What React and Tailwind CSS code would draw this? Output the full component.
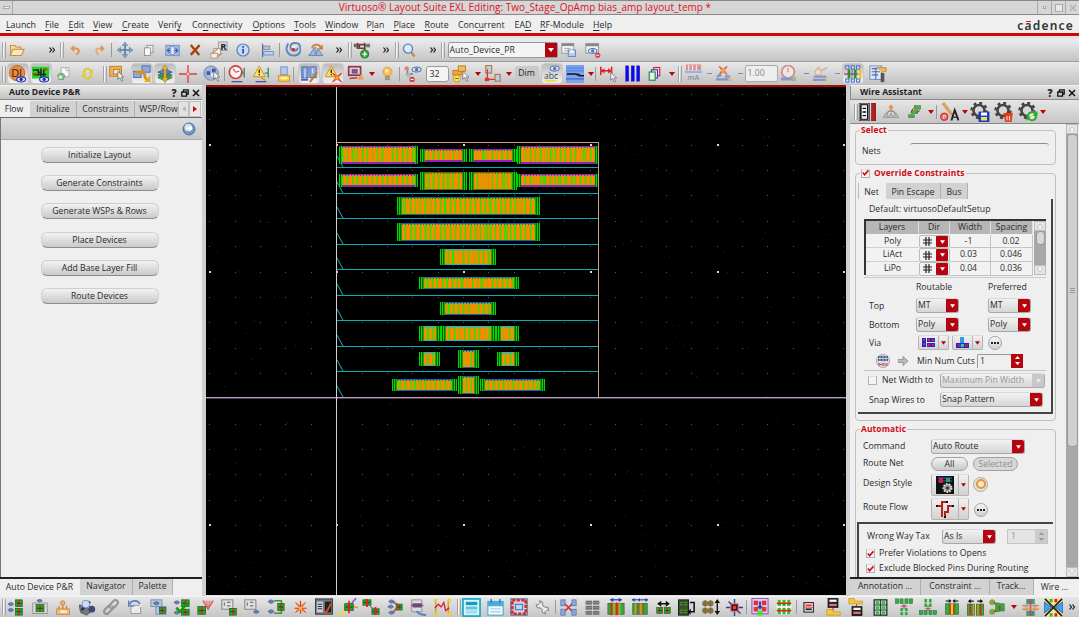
import React from "react";

/* ---------- tiny drawing helpers ---------- */
const R = (x, y, w, h, f, s, sw = 1) => (
  <rect x={x} y={y} width={w} height={h} fill={f || "none"} stroke={s || "none"} strokeWidth={s ? sw : 0} />
);
const C = (x, y, r, f, s, sw = 1) => <circle cx={x} cy={y} r={r} fill={f || "none"} stroke={s || "none"} strokeWidth={s ? sw : 0} />;
const P = (d, s, sw = 1, f = "none") => <path d={d} stroke={s || "none"} strokeWidth={sw} fill={f} />;

const chip = (x, y, w = 7, h = 7) => (
  <g>
    {R(x, y, w, h, "#2f9e2f", "#176017", 0.8)}
    {R(x + w / 2 - 0.8, y, 1.6, h, "#e02020")}
    {R(x + 1, y + h / 2 - 0.5, w - 2, 1, "#0b4a0b")}
  </g>
);
const pin = (x, y) => (
  <g>
    {P(`M${x} ${y}h7`, "#d02020", 1)}
    <ellipse cx={x + 3.5} cy={y} rx="2.6" ry="2" fill="#5b83c4" stroke="#3a5a94" strokeWidth=".6" />
  </g>
);
const cursor = (x, y) => P(`M${x} ${y}l0 9 2-2 2 4 1.6-.8-2-3.8h3z`, "#555", 0.7, "#f4f4f4");
const eye = (x, y, f = "#2030b0") => (
  <g>
    <ellipse cx={x} cy={y} rx="5" ry="2.8" fill="#dfe6f5" stroke={f} strokeWidth="1.2" />
    {C(x, y, 1.9, f)}
  </g>
);
const minus = (x, y) => <g>{C(x, y, 3, "#d84040")}{R(x - 1.8, y - 0.5, 3.6, 1.1, "#fff")}</g>;
const warn = (x, y) => <g>{P(`M${x} ${y}l6.500 12h-13z`, "#c89010", 1, "#ffe27a")}{R(x - 0.7, y + 4, 1.5, 4, "#402000")}{R(x - 0.7, y + 9, 1.5, 1.4, "#402000")}</g>;
const gear = (x, y, r, f) => (
  <g>
    <circle cx={x} cy={y} r={r} fill="none" stroke={f} strokeWidth="2.4" strokeDasharray={`${(r * 6.283) / 16} ${(r * 6.283) / 16}`} />
    <circle cx={x} cy={y} r={r - 2} fill="none" stroke={f} strokeWidth="2.6" />
  </g>
);
const bars = (x, y, n, f, h = 10) => <g>{Array.from({ length: n }, (_, i) => <g key={i}>{R(x + i * 3, y, 1.8, h, f[i % f.length])}</g>)}</g>;
const burst = (x, y, r = 4) =>
  P(`M${x - r} ${y - r}L${x} ${y - 1.4}L${x + r} ${y - r}L${x + 1.4} ${y}L${x + r} ${y + r}L${x} ${y + 1.4}L${x - r} ${y + r}L${x - 1.4} ${y}Z`, "#e83010", 1, "#ffd020");

const ICONS = {
  folder: <g>{P("M3 15V4h5l1.5 2H15V9", "#c88a3c", 1.2, "#f7d9a4")}{P("M2.500 16L6 8.500h13L15.500 16z", "#c88a3c", 1.2, "#fbe6c2")}</g>,
  undo: <g>{P("M6 7h4.5c6 0 6 6 1 9.5", "#e0914a", 3)}{P("M8 1.500v11L2 7z", "", 0, "#e0914a")}</g>,
  redo: <g>{P("M14 7H9.500c-6 0-6 6-1 9.500", "#e8a96e", 3)}{P("M12 1.500v11L18 7z", "", 0, "#e0914a")}</g>,
  move: <g>{P("M10 3v14M3 10h14", "#5578a4", 2)}{P("M10 0l3.500 4.500h-7zM10 20l3.500-4.500h-7zM0 10l4.500-3.500v7zM20 10l-4.500-3.500v7z", "#54779f", 0.6, "#7fa2ca")}</g>,
  copy: <g>{R(8, 3, 8, 10, "#f0f0f0", "#808080")}{R(4.500, 6.500, 8, 10, "#f6f6f6", "#808080")}</g>,
  stretch: <g>{R(1, 3, 18, 14, "#9db8e4", "#6585c0")}{P("M6 7L3 10l3 3M14 7l3 3-3 3M3 10h4M17 10h-4", "#2d55a8", 1.4)}{R(8, 5, 4, 10, "#fff", "#6585c0")}</g>,
  del: P("M4 3l12 14M16.500 3L4 17", "#a8430f", 3.4),
  rot: <g>{R(9, 1, 9, 9, "#ddd", "#999")}<text x="14" y="9" fontSize="10" fontWeight="700" fontFamily="Open Sans, sans-serif" fill="#222" textAnchor="middle">R</text>{R(4, 8, 7, 6, "#f3f3f3", "#999")}{R(1, 13, 7, 5, "#f8efe0", "#a99")}{P("M2 13.500l6-5M7 17l6-4", "#e09040", 1.3)}</g>,
  info: <g>{C(10, 10, 7.500, "#c9daf4", "#5b83c4", 1.5)}{R(9, 8.500, 2.200, 6, "#2d55a8")}{R(9, 5, 2.200, 2.200, "#2d55a8")}</g>,
  align: <g>{P("M3.500 1v18", "#3b62aa", 1.4)}{R(5, 4, 8, 4.500, "#e9b3b3", "#5b83c4")}{R(5, 11.500, 13, 4.500, "#bcd0f0", "#5b83c4")}</g>,
  swirl: <g>{P("M4 2c-5 8 0 15 7 15 8 0 11-8 6-15-4-1-9-2-10 3-1 7 8 8 9 2", "#6285c0", 2.400)}{R(8.500, 5, 4, 6, "#f5f5f5")}{C(10.500, 9.500, 2.200, "#d83030")}</g>,
  flip: <g>{P("M1 17L9 6v11zM10 17h8.500L12 8z", "#54779f", 1, "#9dbae0")}{P("M5 8c1-6 9-6 11-1", "#d47a34", 2.200)}{P("M18.500 3v6.500h-6.500z", "", 0, "#d47a34")}</g>,
  schem: <g>{P("M1 5h4M5 2v7M7 3v5h5M7 4h6M13 2v8M13 5h5", "#6a3a3a", 1.800)}{R(1, 3, 3, 4, "#666")}{R(15, 3, 4, 4, "#777")}{C(13, 14.500, 4.500, "#2fa02f", "#177017", 0.800)}{P("M13 11.800v5.400M10.300 14.500h5.400", "#fff", 1.500)}</g>,
  mag: <g>{P("M11 11l6 7", "#c88a3c", 3)}{C(8, 7.500, 6, "#dfebfa", "#5b83c4", 1.900)}</g>,
  win: <g>{R(1, 2, 15, 12, "#f2f2f2", "#888")}{R(1, 2, 15, 3, "#888")}{P("M4 8h8M4 11h6", "#999")}{R(9, 10, 9, 8, "#b7cbea", "#5b7bb4")}{R(11, 10.500, 5, 3, "#fff")}</g>,
  wineye: <g>{R(1, 2, 15, 11, "#f2f2f2", "#888")}{R(1, 2, 15, 3, "#888")}{eye(9, 10.500, "#5574b4")}{minus(15, 15.500)}</g>,

  di: <g>{C(9, 9, 8.500, "#ee8a3c", "#c86020")}<text x="8.500" y="13" fontSize="12" fontFamily="Open Sans, sans-serif" fill="#222" textAnchor="middle">DI</text>{eye(13.500, 16)}</g>,
  lx: <g>{R(0, 2, 19, 13, "#20d820")}{P("M1 5.500h6v5h9M10 4v9M7 8h3M2 11h5M13 5v8", "#222", 1.600)}{R(1, 9, 4, 2, "#e02020")}{R(13, 4, 4, 2, "#e02020")}{eye(13.500, 16)}</g>,
  doc: <g>{P("M6 1h11v13H6z", "#999", 1, "#f8f8f8")}{P("M13 1v4h4", "#999")}{P("M1 12c3-5 10-3 10 1l-2 5H3z", "#4a9a5a", 1, "#7fc08a")}{C(5, 14.500, 2.200, "#eee")}</g>,
  refresh: <g>{P("M4 9c1-8 9-8 11-3M16 11c-1 8-9 8-11 3", "#dccb28", 2.800)}{P("M18.500 2.500v7h-7zM1.500 17.500v-7h7z", "", 0, "#dccb28")}</g>,
  sel: <g>{R(2, 1.500, 13, 11, "#f0b060", "#c07818")}{R(6, 5, 7, 5, "#e7e7e7", "#c07818")}{cursor(11, 7)}</g>,
  pull: <g>{R(0, 7, 9, 7, "#8da9dc", "#4a6ab0")}{R(10, 1, 9, 7, "#8da9dc", "#4a6ab0")}{P("M3 8h7c5 0 1 7 6 8", "#d8921c", 3.200)}{P("M12 19h7.500v-7.500z", "", 0, "#e8a628")}</g>,
  layers: <g>{P("M2 14l8-3.500 8 3.500-8 3.500z", "#2f7a3f", 1, "#4fb060")}{P("M2 11.500l8-3.500 8 3.500-8 3.500z", "#2f7a3f", 1, "#3c9c50")}{P("M2 8l8-3.500 8 3.500-8 3.500z", "#3a5a9c", 1, "#5e80c8")}{P("M10 0l3.500 4.500h-2.200v10h2.200L10 19.500l-3.500-5h2.200v-10H6.500z", "#a07010", 0.700, "#e8b838")}</g>,
  cross: <g>{P("M10 0v20M0 10h20", "#e04040", 1.500)}{C(10, 10, 2, "#f0d0d0", "#e04040", 0.700)}</g>,
  bluesel: <g>{C(9, 9, 8, "#a8b8d4", "#6a7fa8")}{R(4, 7, 4, 4, "#3a5ab0")}{R(10, 4, 4, 4, "#3a5ab0")}{R(9, 9, 3, 4, "#dfe8f8")}{cursor(12, 7)}</g>,
  gauge: <g>{C(8.500, 8, 7, "#fbf4f4", "#cc4444", 1.900)}{P("M8.500 8l-3-4M8.500 8l4-1", "#c84848", 1.2)}{P("M18 3v11M14 9h4", "#3a8a5a", 1.500)}{P("M4 18.500h12", "#3a5ab0", 1.500)}</g>,
  warn1: <g>{warn(8, 1)}{P("M18 3v11M14 9h4", "#3a8a5a", 1.500)}{P("M4 18.500h12", "#3a5ab0", 1.500)}{P("M10 14l5 3", "#e09020", 1.500)}</g>,
  brush: <g>{R(6, 1, 8, 10, "#b7caea", "#6a86bc")}{R(3, 12, 14, 7, "#f8d040", "#d08a18")}{R(6, 14, 8, 2.500, "#fff4b0")}</g>,
  dev: <g>{R(2, 2, 7, 12, "#7f9bd4", "#4a6ab0")}{R(11, 2, 7, 12, "#8fabe0", "#4a6ab0")}{P("M5.500 4v11M14 4v5", "#dfe8f8", 1.200)}{P("M19 8l-8 11", "#c07818", 2)}{R(1, 15, 8, 2.500, "#4a6ab0")}</g>,
  warnx: <g>{warn(8, 1)}{burst(14.500, 14, 5)}</g>,
  redbox: <g>{R(2, 2, 14, 10, "#cfdaf0", "#a03040", 2)}{R(6, 5.500, 6, 4, "#4a70c0", "#a03040")}{P("M3 16l9-1", "#b04030", 1.800)}{P("M16 11l4 6h-8z", "", 0, "#e8a050")}</g>,
  bulb: <g>{C(10, 7.500, 6, "#f7c050", "#d89030")}{C(9, 6.500, 2.500, "#ffe9a8")}{R(7.500, 13.500, 5, 5, "#a8a090", "#807868", 0.700)}</g>,
  neteye: <g>{eye(14, 5, "#5574b4")}{P("M4 4v6h6M2 10h3", "#777", 1.500)}{C(3, 4, 2.500, "#e08080")}{C(5, 11, 2.500, "#a8b8c8")}{minus(9, 16)}</g>,
  layersel: <g>{R(1, 6, 10, 5, "#f0a840", "#c07818")}{R(7, 1, 8, 6, "#f4bc60", "#c07818")}{C(5.500, 15, 4, "#fbe060", "#c89010")}{R(3.500, 14.500, 4, 1, "#806000")}{cursor(12, 7)}</g>,
  net: <g>{R(2, 0.500, 7, 9, "#b7cbea", "#b87838", 1.300)}{P("M4 5v12h9", "#d83030", 1.400)}{R(1, 15, 5, 4, "#e03030")}{R(13, 11, 6, 8, "#b7cbea", "#b87838", 1.300)}</g>,
  eyeabc: <g>{eye(13, 4, "#5574b4")}<text x="9" y="15.500" fontSize="9.500" fontFamily="Open Sans, sans-serif" fill="#444" textAnchor="middle">abc</text>{R(2, 17, 13, 1.600, "#e8d838")}</g>,
  lines: <g>{R(0, 0, 20, 20, "#7ba4f0")}{P("M0 3.500h20M0 6.500h20", "#4a78d8", 1)}{P("M1 10h10l5 2h4", "#111", 1.600)}{P("M0 15.500h20", "#2d55c0", 1)}{C(14, 11, 1.500, "#222")}</g>,
  ruler: <g>{P("M2 2v9M14 2v9M3 6.500h10", "#e02020", 1.700)}{P("M2 6.500l4-3v6zM14 6.500l-4-3v6z", "", 0, "#e02020")}{cursor(13, 8)}</g>,
  bluebars: <g>{R(2, 1, 3.500, 18, "#0808f8", "#1818a8", 0.500)}{R(8.500, 1, 3.500, 18, "#0808f8", "#1818a8", 0.500)}{R(15, 1, 3.500, 18, "#0808f8", "#1818a8", 0.500)}</g>,
  stack: <g>{R(9, 2, 8, 11, "#f6dcdc", "#d82020", 1.500)}{R(6, 5, 8, 11, "#e8e8f8", "#3838d0", 1.500)}{R(3, 8, 8, 11, "#ececec", "#1f9a3a", 1.600)}</g>,
  ma: <g opacity=".8">{R(2, 0.500, 16, 6, "#e08080")}{R(1, 7, 18, 2.500, "#8fa8dc")}{P("M5 1v6M9 1v6M13 1v6", "#fff", 1)}<text x="10" y="16.500" fontSize="7.500" fontFamily="Open Sans, sans-serif" fontWeight="700" fill="#8090a0" textAnchor="middle">mA</text></g>,
  dim1: <g opacity=".8">{burst(9, 6, 4.500)}{P("M1 16h17M2 13l5-2M11 13h6", "#6a88c8", 2.600)}{R(15, 14, 4, 3, "#e0c860")}</g>,
  dim2: <g opacity=".75">{C(9, 7.500, 7, "#f6eaea", "#d87070", 2)}{P("M9 8V3", "#d87070", 1.400)}{P("M1 15.500h15", "#6a88c8", 3.400)}{R(13, 13, 5, 5, "#8ab48a")}</g>,
  dim3: <g opacity=".75">{P("M4 8l4-6M8 7l9-4", "#d0b0a0", 2.400)}{C(7, 8, 3.500, "#f4dcc8", "#d89070")}{P("M1 16.500h17M2 13h14", "#6a88c8", 2.600)}{R(15, 15, 4, 3, "#e0c860")}</g>,
  matrix: <g>{[2, 8, 14].map((x) => <g key={x}>{R(x, 1, 3.500, 3.500, "#dfe8ff", "#3a5ac0", 1)}{R(x, 15.500, 3.500, 3.500, "#dfe8ff", "#3a5ac0", 1)}</g>)}{R(4, 5, 3, 10, "#18a018")}{R(11, 5, 3, 10, "#18a018")}{P("M0 10h16", "#c03080", 1.500)}{P("M18 4v6h-3M18 10v6", "#f0c010", 1.800)}{P("M9 5v10", "#3a5ac0", 1)}</g>,
  sheet: <g>{R(1, 1, 13, 15, "#dfe6f2", "#6a86bc")}{P("M3 4h9M3 7.500h9M3 11h7M7.500 3v13", "#4a6ab0", 1.200)}{P("M8 3h11v4l-5 1", "#c8882c", 1, "#f0b858")}{R(13, 9, 4, 10, "#555")}</g>,

  film: <g>{R(1, 0, 12, 20, "#111")}{R(4, 2.500, 6, 15, "#f4f4f4")}{R(2, 1, 10, 18, "", "#f4f4f4", 0.600)}{P("M5 6h4M5 10h4M5 14h4", "#111", 1.600)}{R(15, 0, 5, 20, "#b02020", "#701010", 0.600)}</g>,
  tree: <g>{P("M10 5v4M4 13l3-4h6l3 4", "#8a8a8a", 1.500)}{C(10, 4, 2.600, "#f09040")}{P("M0 17l4-6 3 6zM7 17l3-6 3 6zM13 17l3-6 4 6z", "#888", 0.800, "#bbb")}</g>,
  route: <g>{R(9, 1, 9, 5, "#48b048", "#207020", 0.700)}{R(5, 8, 9, 4, "#48b048", "#207020", 0.700)}{R(1, 14, 8, 4, "#48b048", "#207020", 0.700)}{P("M17 8l-5 3M8 4l-4 7", "#d02020", 1.400)}</g>,
  compass: <g>{P("M3 1l10 13", "#e0a060", 3.400)}{P("M12 19.500l3.500-11 4 11", "#222", 2)}{P("M13.500 16h5", "#222", 1.200)}{C(4.500, 15.500, 4, "#e86060", "#c03030")}<text x="4.500" y="18" fontSize="6.500" fill="#fff" fontFamily="Open Sans, sans-serif" textAnchor="middle">P</text></g>,
  gearsave: <g>{gear(9, 8.500, 7.500, "#444")}{R(9, 10, 10, 9.500, "#2040e0", "#102090", 0.700)}{R(11, 10.500, 6, 3, "#fff")}{R(11, 15, 6, 3.500, "#f0e040")}</g>,
  geardel: <g>{gear(9, 8.500, 7.500, "#444")}{R(9.500, 11, 9.500, 1.800, "#f04010")}{P("M10.500 13h7.500l-.7 6.500h-6z", "#c02000", 0.600, "#f84020")}{P("M13 14v4.500M15.500 14v4.500", "#fff", 0.800)}</g>,
  gearref: <g>{gear(9, 8.500, 7.500, "#444")}{C(14, 14, 4.500, "#e4e4e4")}{P("M10 14.500c0-5 6-5 7.500-2.500M18 14c0 5-5.500 5-7.500 2.500", "#20b020", 1.900)}{P("M19.500 9v5h-5zM8.500 19v-4.500h4.500z", "", 0, "#20b020")}</g>,

  b1: <g>{pin(1, 6)}{pin(1, 13)}{chip(10, 1, 8, 8)}{chip(10, 11, 8, 8)}</g>,
  b2: <g>{pin(6, 2)}{R(1, 5, 18, 13, "#dcdcdc", "#888")}{chip(5, 7, 10, 9)}</g>,
  b3: <g>{C(9, 4, 3, "#f4b468", "#c87820")}{P("M9 7v6M4 13V8M14 13V8", "#c87820", 1.600)}{R(1, 12, 17, 7, "#f4c080", "#c87820")}{R(6, 14, 8, 3, "#fff0d0")}</g>,
  b4: <g>{P("M0 7l9 2 5 6-5 4-7-3z", "#444", 0.800, "#707888")}{P("M3 13l10-10", "#333", 3)}{C(8, 6, 4.500, "#cfdcf4", "#6a86c0")}{C(15, 12, 4, "#404a70")}</g>,
  b5: <g>{P("M9 11c-2-2-1-3 1-5l3-3c3-2 6 1 4 4l-4 4c-1 1-2 1-3 0M11 9c2 2 1 3-1 5l-3 3c-3 2-6-1-4-4l4-4c1-1 2-1 3 0", "#939393", 2.300)}</g>,
  b6: <g>{P("M5 8h12v10H5z", "#888", 1, "#f2f2f2")}{P("M3 7C5 1 14 1 16 6", "#5b83c4", 2.400)}{P("M8 11l3 4 8-9", "#dfe8f8", 2.400)}{P("M2 2v7h7", "#5b83c4", 1.600)}</g>,
  b7: <g>{R(1, 1, 13, 8, "#b7c6e0", "#7088b0")}{pin(4, 5)}{R(7, 9, 12, 9, "#b7c6e0", "#7088b0")}{chip(11, 10, 7, 7)}</g>,
  b8: <g>{pin(1, 4)}{pin(1, 16)}{chip(10, 1, 9, 8)}{chip(10, 12, 9, 7)}{P("M4 10l4 5 10-11", "#109a10", 3)}</g>,
  b9: <g>{P("M7 2l6 10 6-10", "#d86060", 1.600, "#eab0b0")}{P("M11 2l2 10 2-10", "#d86060", 0.800)}{chip(1, 9, 9, 9)}</g>,
  b10: <g>{R(1, 1, 13, 11, "#e0e0e0", "#777")}{P("M4 4v4M7 4h4M7 8h4", "#777", 1.400)}{chip(10, 11, 8, 8)}</g>,
  b11: <g>{R(1, 1, 13, 11, "#e0e0e0", "#777")}{P("M4 4v4M7 4h4M7 8h4", "#777", 1.400)}{pin(11, 15)}</g>,
  b12: <g>{pin(1, 4)}{pin(1, 15)}{P("M8 3h8v3M8 17h8v-3", "#2f9e2f", 1.600)}{chip(12, 6, 7, 8)}</g>,
  b13: <g>{burst(10, 10, 6.500)}{P("M10 1v17M2 11h16", "#e83010", 1.600)}{C(10, 11, 2, "#ffd020")}</g>,
  b14: <g>{R(0.500, 1, 19, 17, "#707880", "#333")}{R(2, 4, 7, 12, "#c7ced8")}{P("M3 7h5M3 9.500h5M3 12h5", "#333", 1.200)}{R(11, 4, 7, 12, "#222")}{P("M10 14l2 3 6-11", "#d85020", 2)}</g>,
  b15: <g>{P("M13 6l5-6", "#a040d0", 1.500)}{P("M0 18l7-4", "#f0e020", 2.200)}{P("M15 9l5 1", "#e09050", 1.600)}{chip(6, 6, 9, 7)}{P("M10.500 3v13", "#e02020", 1.800)}</g>,
  b16: <g>{chip(1, 2, 9, 6)}{P("M9 9l5 4", "#a050c0", 1.2)}{chip(11, 12, 8, 6)}{P("M5.500 1v9M15 10v9", "#e02020", 2)}</g>,
  b17: <g>{P("M8 3l7 5-7 8", "#d06060", 2.400)}{pin(3, 3)}{pin(3, 16)}{chip(12, 6, 7, 7)}{pin(2, 9)}</g>,
  b18: <g>{P("M2 1h12v14H2z", "#888", 1, "#dcdcdc")}{R(3, 5, 11, 5, "#4a5a90")}{P("M1 7.500h15", "#d02020", 1)}{P("M8 14c2 5 6 4 11 5", "#5b83c4", 2.400)}</g>,
  b19: <g>{P("M3 3v14M17 3v14", "#c8a020", 1.500)}{P("M2 11l4-4 3 3 3-5 2 9 4-3", "#e02020", 1.500)}{R(1, 1, 3.500, 3.500, "#f0d020")}{R(16, 1, 3.500, 3.500, "#f0d020")}{R(1, 16, 3.500, 3.500, "#f0d020")}{R(16, 16, 3.500, 3.500, "#f0d020")}</g>,
  b20: <g>{R(1, 1, 18, 18, "#d8f4fb", "#18a8c8", 1.800)}{R(4, 4, 12, 3.500, "#189ab8")}{R(4, 9, 12, 3, "#5cc4dc")}{R(4, 13, 12, 3.500, "#a4dcea")}</g>,
  b21: <g>{R(1, 3, 18, 16, "#f4fafd", "#48b0d8", 1.400)}{R(1, 3, 18, 5.500, "#48b0d8")}{P("M5 0v5M15 0v5", "#2888b8", 1.800)}{P("M4 11.500h12M4 15h12", "#a8d4ea", 1.500)}</g>,
  b22: <g>{R(1, 1, 18, 18, "#c4d4f0", "#3868b0", 1.200)}<rect x="2.500" y="2.500" width="15" height="15" fill="none" stroke="#e02818" strokeWidth="3" strokeDasharray="3.500 1.500" />{R(5, 5, 10, 10, "#c4d4f0")}{R(6, 7, 8, 6, "#c4d4f0", "#3868b0", 1)}</g>,
  b23: <g>{P("M6 6l8 8", "#8a8a8a", 5)}{P("M2.500 7a4 4 0 1 0 4-4.500l1 3.500zM17.500 13a4 4 0 1 0-4 4.500l-1-3.500z", "#8a8a8a", 1.200, "#e6e6e6")}{P("M6 6l8 8", "#ececec", 3)}</g>,
  b24: <g>{P("M5 5l10 10M15 5L5 15", "#d83030", 2)}{R(1, 1, 5, 7, "#8fa8d8", "#4a6ab0", 0.800)}{R(14, 1, 5, 7, "#8fa8d8", "#4a6ab0", 0.800)}{R(1, 12, 5, 7, "#8fa8d8", "#4a6ab0", 0.800)}{R(14, 12, 5, 7, "#8fa8d8", "#4a6ab0", 0.800)}</g>,
  b25: <g>{[2, 8, 14].map((y) => <g key={y}>{R(2, y, 7.500, 4.500, "#6c6c6c")}{R(10.500, y, 7.500, 4.500, "#6c6c6c")}{P(`M1 ${y + 2.2}h18`, "#a0a0a0", 0.800)}</g>)}</g>,
  b26: <g>{P("M4 2h12", "#2040b0", 1.4)}{P("M7 0L3 2l4 2.500zM13 0l4 2-4 2.500z", "", 0, "#2040b0")}{R(1, 6, 18, 12, "#2fae3f", "#1c6c2a", 0.800)}{bars(4, 5, 4, ["#e02020", "#f09020"], 14)}</g>,
  b27: <g>{P("M1 2h18", "#2040b0", 1.2)}{P("M4 0L1 2l3 2.500zM10 0L8 2l2 2.500zM16 0l3 2-3 2.500z", "", 0, "#2040b0")}{R(2, 6, 16, 12, "#2fae3f", "#1c6c2a", 0.800)}{bars(4, 6, 4, ["#c8a020", "#d04020"], 12)}</g>,
  b28: <g>{P("M4 5h12", "#111", 2)}{P("M7 1L1.500 5 7 9zM13 1l5.500 4L13 9z", "", 0, "#111")}{chip(1, 10, 8, 8)}{chip(11, 10, 8, 8)}</g>,
  b29: <g>{R(0.500, 1, 12, 18, "#444", "#111")}{chip(2, 3, 9, 5)}{chip(2, 12, 9, 5)}{P("M14 4h5v11h-5", "#111", 1.800)}{P("M15 11.500l-4 3.500 4 3.500z", "", 0, "#111")}</g>,
  b30: <g>{[[1, 3], [7, 3], [1, 11], [7, 11]].map(([x, y]) => <g key={x + "-" + y}>{C(x + 2.5, y + 3, 3, "#48a048", "#8a6030", 0.8)}{R(x + 1.8, y, 1.3, 6, "#e03030")}</g>)}{P("M17 5v10", "#111", 1.500)}{P("M17 1l-3 4.500h6zM17 19l-3-4.500h6z", "", 0, "#111")}</g>,
  b31: <g>{R(6, 6, 8, 8, "#111", "#d83030", 1.400)}{P("M10 0v5M10 15v5M0 10h5M15 10h5M3 3l3 3M17 17l-3-3", "#2040b0", 1.700)}{R(8, 8, 4, 4, "#e04040")}</g>,
  b32: <g>{R(1, 0.500, 18, 17, "#e0d0f0", "#9858c0", 1.2)}{R(3, 3, 5, 5, "#e03030")}{R(12, 3, 5, 5, "#e03030")}{R(3, 10, 5, 5, "#e03030")}{R(12, 10, 5, 5, "#e03030")}{P("M10 4v8", "#2040b0", 2)}{P("M7 9h6l-3 4z", "", 0, "#2040b0")}{R(7, 14, 6, 5.500, "#48d848")}</g>,
  b33: <g>{R(1, 1, 18, 18, "#fff")}{[2, 8, 14].map((x) => <g key={x}>{R(x, 1, 4, 8, "#30c030")}{R(x, 11, 4, 8, "#30c030")}</g>)}{P("M1 5.500h18M1 14.500h18", "#e02020", 2.400)}</g>,
  b34: <g>{R(2, 3, 15, 15, "#222")}{R(3.500, 4.500, 12, 12, "#f4e4e4")}{R(5, 6.500, 9, 2.500, "#e03030")}{R(5, 12, 9, 2.500, "#222")}{P("M3 10.500h13", "#e03030", 1)}</g>,
  b35: <g>{R(4, 0, 12, 11, "#222")}{R(6, 1.800, 8, 2.500, "#f8f8f8")}{R(6, 6.500, 8, 2.500, "#e87070")}{P("M10 11v3", "#e02020", 1.200)}{P("M3 13v6h15v-3.500h-8v-2.500z", "#c89010", 0.800, "#f8cc38")}</g>,
  b36: <g>{P("M1 0.500v6h15V3.500H7v-3z", "#c89010", 0.800, "#f8cc38")}{P("M9.500 7v2", "#e02020", 1.200)}{R(4, 9, 12, 11, "#222")}{R(6, 10.800, 8, 2.500, "#f8f8f8")}{R(6, 15.200, 8, 2.500, "#e87070")}</g>,
  b37: <g>{R(2.500, 1, 15, 18, "#c8d8c8", "#222", 1.400)}{P("M10 1v18M2.500 7h15M2.500 13h15", "#222", 1)}{[2.500, 8.500, 14.500].map((y) => [4.500, 11.500].map((x) => <g key={x + "-" + y}>{R(x, y, 4, 3.500, "#38c048")}</g>))}</g>,
  b38: <g>{[0.5, 5.5, 11, 16].map((x) => <g key={x}>{R(x, 1, 3.500, 5, "#2fae3f", "#1c6c2a", 0.600)}</g>)}{P("M10 6v6M7 9h6", "#c04080", 1.200)}{R(6, 11, 3, 3.500, "#2fae3f")}{R(11, 11, 3, 3.500, "#2fae3f")}{R(6, 15.500, 3, 3.500, "#2fae3f")}{R(11, 15.500, 3, 3.500, "#2fae3f")}</g>,
  b39: <g>{R(6, 1, 3, 4, "#2fae3f")}{R(11, 1, 3, 4, "#2fae3f")}{R(6, 6, 3, 4, "#2fae3f")}{R(11, 6, 3, 4, "#2fae3f")}{P("M10 8v6M7 12h6", "#c04080", 1.200)}{[0.5, 5.5, 11, 16].map((x) => <g key={x}>{R(x, 14, 3.500, 4.500, "#2fae3f", "#1c6c2a", 0.600)}</g>)}</g>,
  b40: <g>{P("M2 2.500h5M18 2.500h-5", "#111", 1.500)}{P("M6 0l3.500 2.500L6 5zM14 0l-3.500 2.500L14 5z", "", 0, "#111")}{R(2, 6, 16, 13, "#2fae3f", "#1c6c2a", 0.800)}{R(8, 6, 4, 13, "#f0d020")}{R(6.500, 6, 2, 13, "#e02020")}{R(11.500, 6, 2, 13, "#e02020")}</g>,
  b41: <g>{P("M3 2.500h5M12 2.500h5", "#111", 1.500)}{P("M4.500 0L1 2.500 4.500 5zM15.500 0L19 2.500 15.500 5z", "", 0, "#111")}{R(0.500, 6, 8.500, 13, "#2fae3f", "#1c6c2a", 0.800)}{R(11, 6, 8.500, 13, "#2fae3f", "#1c6c2a", 0.800)}{R(3, 6, 2, 13, "#e02020")}{R(7, 6, 1.500, 13, "#f09020")}{R(12, 6, 1.500, 13, "#f09020")}{R(15, 6, 2, 13, "#e02020")}</g>,
  b42: <g>{C(4, 4, 3.200, "#58b858", "#c08020")}{C(4, 16, 3.200, "#58b858", "#c08020")}{P("M6 4l5 4M6 16l5-4", "#e02020", 1.400)}{R(8, 5, 5, 11, "#2fae3f", "#1c6c2a", 0.600)}{R(14, 6, 5, 9, "#2fae3f", "#1c6c2a", 0.600)}{R(12, 8, 1.500, 6, "#e02020")}</g>,
  b43: <g>{R(3, 6, 4, 8, "#a0b8e8")}{R(13, 6, 4, 8, "#a0b8e8")}{R(5, 0, 10, 6, "#48a060")}{R(5, 14, 10, 6, "#48a060")}{R(9, 0, 2, 20, "#c04080")}{R(6, 2, 2.5, 3, "#4878c8")}{R(11.5, 15, 2.5, 3, "#4878c8")}{P("M0 8h20M0 12h20", "#e89030", 1.600)}</g>,
  b44: <g>{R(0, 0.500, 20, 19, "#f4e890")}{P("M1 1l18 18M19 1L1 19", "#222", 1.800)}{P("M0 4l8 6-8 6zM20 4l-8 6 8 6z", "#1848a0", 0.800, "#48a0e8")}{R(6, 1, 3, 3.5, "#2fae3f")}{R(11, 1, 3, 3.5, "#e02020")}{R(6, 16, 3, 3.5, "#2fae3f")}{R(11, 16, 3, 3.5, "#e02020")}</g>,
  globe: <g>{C(10, 10, 8.500, "#7296c8", "#48689c", 1.400)}{C(9, 8, 5.500, "#d4e2f4")}{P("M6 9h8M11 6l3 3-3 3", "#fff", 2)}</g>,
};

const Icon = ({ n, s = 19 }) => (
  <svg width={s} height={s} viewBox="0 0 20 20" className="block shrink-0">{ICONS[n]}</svg>
);
const Down = ({ c = "#b40808", w = 6 }) => (
  <svg width={w} height="4" viewBox="0 0 6 4" className="block shrink-0"><path d="M0 0h6L3 4z" fill={c} /></svg>
);
const Grip = () => (
  <div className="flex h-[16px] w-[4px] justify-between">
    <i className="w-px bg-[#a4a4a4] shadow-[1px_0_0_#f4f4f4]" />
    <i className="w-px bg-[#a4a4a4]" />
  </div>
);
const Sep = () => <div className="h-[14px] w-px bg-[#9a9a9a]" />;
const More = () => (
  <svg width="6" height="6" viewBox="0 0 6 6" className="block"><path d="M.5.5L2.500 3 .5 5.500M3.500.5L5.500 3 3.500 5.500" fill="none" stroke="#111" strokeWidth="1.200" /></svg>
);
const Press = ({ children }) => (
  <div className="flex h-[21px] w-[22px] items-center justify-center rounded-[4px] border border-[#cacaca] bg-linear-to-b from-[#bdbdbd] to-[#f2f2f2]">{children}</div>
);

/* A bar whose items are [centre, width, node]; gaps follow from neighbouring items. */
function Bar({ items, start = 0, className }) {
  let edge = start;
  return (
    <div className={"flex items-center " + className}>
      {items.map(([c, w, node], i) => {
        const left = c - w / 2;
        const gap = left - edge;
        edge = left + w;
        return (
          <div key={i} className="flex shrink-0 items-center justify-center" style={{ width: w, marginLeft: gap }}>
            {node}
          </div>
        );
      })}
    </div>
  );
}
const ic = (c, n, s = 19) => [c, s, <Icon n={n} s={s} />];
const pr = (c, n) => [c, 22, <Press><Icon n={n} s={18} /></Press>];
const gr = (c) => [c, 4, <Grip />];
const sp = (c) => [c, 1, <Sep />];
const dn = (c) => [c, 6, <Down />];
const mo = (c) => [c, 6, <More />];
const da = (c) => [c, 5, <i className="h-px w-[5px] bg-[#888]" />];

/* [before mnemonic, mnemonic, after, x] */
const MENUS = [
  ["", "L", "aunch", 6], ["", "F", "ile", 45], ["", "E", "dit", 68.5], ["", "V", "iew", 93], ["", "C", "reate", 122],
  ["Verif", "y", "", 158], ["Co", "n", "nectivity", 192], ["", "O", "ptions", 252.5], ["", "T", "ools", 294], ["", "W", "indow", 325],
  ["P", "l", "an", 366.5], ["", "P", "lace", 393.5], ["", "R", "oute", 424.5], ["Conc", "u", "rrent", 458], ["EA", "D", "", 514.5],
  ["", "R", "F-Module", 540], ["", "H", "elp", 593],
];

/* ---------- canvas ---------- */
function rng(seed) {
  let s = seed;
  return () => ((s = (s * 16807) % 2147483647) / 2147483647);
}
const BODY = ["#ff8800", "#ff8800", "#d09c00", "#24e400", "#b4a800", "#ff8800", "#ff8c00", "#a0b400", "#40dc00", "#e09000"];
function Device({ x0, x1, y0, y1, caps = 5, edge = "#0b5a6c", seed = 7 }) {
  const rand = rng(seed * 7919 + 13);
  const cols = [];
  const a = Math.round(x0), b = Math.round(x1);
  const h = y1 - y0;
  for (let x = a; x < b; x++) {
    const d = Math.min(x - a, b - 1 - x);
    let f;
    if (d < caps) f = ["#00d800", "#004c00", "#00e000", "#0a6a0a", "#18a800"][d];
    else f = rand() < 0.82 ? BODY[(x - a) % 10] : BODY[Math.floor(rand() * 10)];
    cols.push(<rect key={x} x={x} y={d < caps ? y0 : y0 + 1} width="1" height={d < caps ? h : h - 2} fill={f} />);
  }
  const w = b - a - 2 * caps;
  const eh = edge === PU ? 2 : 1;
  return (
    <g>
      {cols}
      <rect x={a + caps} y={y0} width={w} height="1" fill={edge} />
      <rect x={a + caps} y={y1 - eh} width={w} height={eh} fill={edge} />
      <path d={`M${a + caps} ${y0 + 1.5}H${b - caps}`} stroke={edge} strokeWidth="1" strokeDasharray="1 2" />
    </g>
  );
}
const PU = "#9020c0", BL = "#0860c8", CY = "#20b8c8";
const DEVICES = [
  [339, 418, 146, 164, 3, PU], [420, 467, 149, 162, 5, PU], [469, 517, 149, 162, 5, PU], [517, 599, 146, 164, 4, PU],
  [339, 418, 174, 187, 3, PU], [420, 467, 172, 190, 5, "#5a6a10"], [469, 517, 172, 190, 5, "#5a6a10"], [517, 599, 174, 187, 4, PU],
  [397, 540, 197, 215, 5, "#0b6a80"], [397, 540, 223, 241, 5, BL], [440, 496, 249, 265, 5, CY], [419, 519, 277, 289, 5, "#10808c"],
  [440, 496, 302, 315, 5, BL],
  [419, 441, 326, 341, 5, CY], [441, 496, 326, 341, 5, CY], [496, 519, 326, 341, 5, CY],
  [419, 440, 352, 366, 5, CY], [458, 479, 350, 368, 5, BL], [497, 519, 352, 366, 5, CY],
  [392, 457, 379, 391, 5, BL], [458, 479, 376, 394, 5, BL], [480, 545, 379, 391, 5, BL],
];
const ROWS = [167, 193, 218, 244, 269, 295, 320, 346, 371];

function Canvas() {
  const dots = [];
  for (let i = 0; i < 26; i++)
    for (let j = 0; j < 21; j++) {
      const x = Math.round(209.4 + i * 25.36), y = Math.round(94 + j * 25.36);
      const big = i % 5 === 0 && j % 5 === 2;
      dots.push(<rect key={i + "-" + j} x={x} y={big ? y - 1 : y} width={big ? 2 : 1} height={big ? 2 : 1} fill={big ? "#d8d8d8" : "#585870"} />);
    }
  const rand = rng(4242);
  for (let k = 0; k < 620; k++) {
    const x = Math.floor(207 + rand() * 638), y = Math.floor(88 + rand() * 506);
    if (x > 336 && x < 599 && y > 142 && y < 398) continue;
    dots.push(<rect key={"n" + k} x={x} y={y} width="1" height="1" fill={k % 5 ? "#08085a" : "#1414a0"} />);
  }
  return (
    <svg width="640" height="510" viewBox="206 85 640 510" shapeRendering="crispEdges" className="block">
      <rect x="206" y="85" width="640" height="510" fill="#000" />
      {dots}
      <rect x="206" y="397" width="640" height="1" fill="#b8a4b0" />
      <rect x="206" y="398" width="640" height="1" fill="#4a3c58" />
      {ROWS.map((y) => <rect key={y} x="337" y={y} width="261" height="1" fill="#08aab4" />)}
      <g shapeRendering="auto">
        {[...ROWS, 397].map((y) => <path key={y} d={`M337 ${y - 11}L343 ${y}`} stroke="#0c9aa4" strokeWidth="1.1" />)}
      </g>
      {DEVICES.map(([x0, x1, y0, y1, caps, edge], i) => <Device key={i} {...{ x0, x1, y0, y1, caps, edge }} seed={i + 3} />)}
      <rect x="336" y="142" width="263" height="1" fill="#c8a48c" />
      <rect x="598" y="142" width="1" height="256" fill="#c8a48c" />
      <rect x="336" y="85" width="1" height="510" fill="#d8ccc8" />
      <rect x="206" y="85" width="640" height="2" fill="#a80808" />
    </svg>
  );
}

/* ---------- widgets ---------- */
const DockHead = ({ title, className }) => (
  <div className={"flex h-[14px] shrink-0 items-center justify-between border-b border-[#8a8a8a] bg-linear-to-b from-[#e6e6e6] to-[#c2c2c2] text-[8.6px] font-bold text-[#222] " + className}>
    <span>{title}</span>
    <span className="flex items-center gap-[3px]">
      <b className="w-[8px] text-center text-[10px] leading-none">?</b>
      <svg width="8" height="8" viewBox="0 0 8 8"><path d="M2.500 3V.8h4.700V5H5.500M.8 3h4.700v4.200H.8z" fill="none" stroke="#111" strokeWidth="1.300" /></svg>
      <svg width="8" height="8" viewBox="0 0 8 8"><path d="M1 1l6 6M7 1L1 7" stroke="#111" strokeWidth="1.500" /></svg>
    </span>
  </div>
);
const Combo = ({ children, className, off }) => (
  <div className={"flex h-[15px] items-stretch overflow-hidden rounded-[3px] border border-[#a8a8a8] border-t-[#d8d8d8] bg-linear-to-b from-[#f2f2f2] to-[#d6d6d6] " + className}>
    <span className={"flex-1 pl-px leading-[13px] whitespace-nowrap " + (off ? "text-[#969696]" : "")}>{children}</span>
    <span className={"flex w-[12px] items-center justify-center " + (off ? "bg-[#c8c8c8]" : "bg-[#b40410]")}><Down c={off ? "#eee" : "#fff"} w={5} /></span>
  </div>
);
const Check = ({ on = true }) => (
  <span className="flex size-[9px] shrink-0 items-center justify-center border border-[#b0b0b0] border-t-[#dcdcdc] bg-[#f4f4f4]">
    {on && <svg width="8" height="8" viewBox="0 0 8 8"><path d="M1 3.500l2 2.500L7.300 1" fill="none" stroke="#d80818" strokeWidth="1.900" /></svg>}
  </span>
);
const Dots = ({ className }) => (
  <span className={"flex size-[14px] items-center justify-center gap-px rounded-full border border-[#a4a4a4] bg-linear-to-b from-[#f6f6f6] to-[#cfcfcf] " + className}>
    <i className="size-[2px] bg-[#222]" /><i className="size-[2px] bg-[#222]" /><i className="size-[2px] bg-[#222]" />
  </span>
);
const Split = ({ children, className }) => (
  <span className={"flex items-stretch rounded-[2px] border border-[#b4b4b4] border-t-[#dcdcdc] bg-linear-to-b from-[#f0f0f0] to-[#d2d2d2] " + className}>
    <span className="flex flex-1 items-center justify-center border-r border-[#b4b4b4]">{children}</span>
    <span className="flex w-[9px] items-center justify-center"><Down w={5} /></span>
  </span>
);
const Group = ({ title, check, className, children }) => (
  <fieldset className={"ml-[5px] w-[201px] min-w-0 rounded-[4px] border border-[#c0c0c0] " + className}>
    <legend className="ml-[4px] flex h-[12px] items-center gap-[4px] px-px text-[8.4px] font-bold tracking-[0.15px] text-[#d00814]">{check && <Check />}{title}</legend>
    {children}
  </fieldset>
);
const Tab = ({ on, children, className }) => (
  <div className={"flex items-center justify-center overflow-hidden whitespace-nowrap " + (on ? "bg-[#efefef] " : "border-r border-[#b0b0b0] bg-[#d2d2d2] ") + className}>{children}</div>
);

function LeftDock() {
  const steps = ["Initialize Layout", "Generate Constraints", "Generate WSPs & Rows", "Place Devices", "Add Base Layer Fill", "Route Devices"];
  return (
    <section className="flex w-[202px] flex-col bg-[#efefef]">
      <DockHead title="Auto Device P&R" className="mt-px pr-[2px] pl-[9px]" />
      <div className="flex h-[18px] items-stretch border-b border-[#666] pt-px">
        <Tab on className="w-[30px] pt-[2px] pr-[2px]">Flow</Tab>
        <Tab className="w-[47px] pt-[2px]">Initialize</Tab>
        <Tab className="w-[58px] pt-[2px]">Constraints</Tab>
        <Tab className="w-[43px] border-r-0 pt-[2px] pl-[4px]">WSP/Row</Tab>
        <span className="flex w-[11px] items-center justify-center border border-[#c0c0c0] bg-[#e2e2e2]"><svg width="4" height="6" viewBox="0 0 4 6"><path d="M4 0v6L0 3z" fill="#bbb" /></svg></span>
        <span className="flex w-[12px] items-center justify-center border border-[#c0c0c0] bg-[#e8e8e8]"><svg width="4" height="6" viewBox="0 0 4 6"><path d="M0 0v6l4-3z" fill="#d00818" /></svg></span>
      </div>
      <div className="flex min-h-0 flex-1 flex-col border-l border-[#777]">
        <div className="flex h-[22px] shrink-0 items-center justify-end border-b border-[#aaa] bg-linear-to-b from-[#dedede] to-[#c6c6c6] pr-[6px]"><Icon n="globe" s={14} /></div>
        <div className="mt-[7px] flex flex-col items-center gap-[12.2px] pr-[4px]">
          {steps.map((s) => (
            <button key={s} className="h-[16px] w-[118px] rounded-[6px] border border-[#cfcfcf] border-b-[#8c8c8c] bg-linear-to-b from-[#f2f2f2] to-[#cacaca] leading-[14px]">{s}</button>
          ))}
        </div>
      </div>
      <div className="flex h-[19px] shrink-0 items-stretch border-t-2 border-[#222]">
        <Tab on className="w-[80px] pr-px">Auto Device P&R</Tab>
        <Tab className="mb-px w-[53px]">Navigator</Tab>
        <Tab className="mb-px w-[40px]">Palette</Tab>
      </div>
    </section>
  );
}

const Track = ({ className, children }) => <div className={"flex flex-col items-center bg-[#a8a8a8] " + className}>{children}</div>;
const Arrow = ({ up }) => (
  <span className="flex h-[10px] w-full shrink-0 items-center justify-center border border-[#bbb] bg-[#e4e4e4]">
    <svg width="6" height="4" viewBox="0 0 6 4"><path d={up ? "M0 4h6L3 0z" : "M0 0h6L3 4z"} fill="#fff" stroke="#999" strokeWidth=".5" /></svg>
  </span>
);

function RightDock() {
  return (
    <section className="flex w-[229px] flex-col bg-[#efefef]">
      <DockHead title="Wire Assistant" className="mt-px border-l border-l-[#888] pr-[3px] pl-[9px]" />
      <Bar className="h-[24px] shrink-0 border-b border-[#888] bg-linear-to-b from-[#e6e6e6] to-[#c6c6c6]" start={850}
        items={[gr(856), ic(867, "film", 18), ic(891, "tree", 16), ic(915, "route", 14), dn(931), sp(936), ic(949, "compass", 19), dn(965), ic(980, "gearsave", 20), ic(1004, "geardel", 20), ic(1028, "gearref", 20), dn(1043)]} />
      <div className="flex min-h-0 flex-1 overflow-hidden">
        <div className="w-[215px] shrink-0 overflow-hidden">
          <Group title="Select" className="h-[41px]">
            <div className="ml-[6px] flex items-start">
              <span className="mt-[9px] w-[48px] leading-[12px]">Nets</span>
              <i className="mt-[7px] h-[6px] w-[139px] rounded-t-[3px] border-t border-[#909090]" />
            </div>
          </Group>
          <Group title="Override Constraints" check className="mt-[2px] h-[254px]">
            <div className="ml-[2px] flex w-[195px] flex-col">
              <div className="mt-[4px] flex h-[16px] items-stretch">
                <Tab on className="w-[28px] border-l border-[#bbb] pt-[3px] pr-[2px]">Net</Tab><Tab className="w-[55px] pt-[3px]">Pin Escape</Tab><Tab className="w-[27px] pt-[3px]">Bus</Tab>
              </div>
              <div className="h-[215px] border-r-2 border-b-2 border-[#444] pl-[6px]">
                <div className="ml-[5px] h-[20px] pt-[4px] leading-[12px] tracking-[0.05px]">Default: virtuosoDefaultSetup</div>
                <div className="flex h-[56px] w-[182px] border-t-2 border-l-2 border-[#333] bg-[#f2f2f2]">
                  <div className="grid flex-1 auto-rows-[13.7px] grid-cols-[53px_31px_41px_42px] text-center leading-[13px]">
                    {["Layers", "Dir", "Width", "Spacing"].map((h) => <span key={h} className="h-[13px] border-r border-[#ddd] bg-[#b6b6b6]">{h}</span>)}
                    {[["Poly", "-1", "0.02"], ["LiAct", "0.03", "0.046"], ["LiPo", "0.04", "0.036"]].map(([n, w, s]) => (
                      <React.Fragment key={n}>
                        <span className="border-b border-[#d0d0d0]">{n}</span>
                        <span className="flex items-stretch justify-between rounded-[2px] border border-[#bbb] pl-[3px]">
                          <svg width="9" height="11" viewBox="0 0 9 11" className="self-center"><path d="M3 1v9M6 1v9M0 4h9M0 7h9" stroke="#222" strokeWidth="1.200" /></svg>
                          <span className="mr-px flex w-[12px] items-center justify-center rounded-[1px] bg-[#b40410]"><Down c="#fff" w={5} /></span>
                        </span>
                        <span className="border-r border-b border-[#c4c4c4] pr-[3px]">{w}</span>
                        <span className="border-r border-b border-[#c4c4c4] pr-px">{s}</span>
                      </React.Fragment>
                    ))}
                  </div>
                  <Track className="w-[12px]"><Arrow up /><i className="h-[14px] w-[9px] rounded-[4px] border border-[#999] bg-[#d8d8d8]" /><i className="flex-1" /><Arrow /></Track>
                </div>
                <div className="mt-[2px] w-[182px] border-t border-[#ccc]" />
                <div className="ml-[5px] grid grid-cols-[47px_72px_60px] leading-[12px]">
                  <span /><span className="pt-[3px]">Routable</span><span className="pt-[3px]">Preferred</span>
                </div>
                <div className="mt-[5px] ml-[5px] grid grid-cols-[47px_72px_44px] items-center gap-y-[4px] leading-[12px]">
                  <span>Top</span><Combo className="w-[43px]">MT</Combo><Combo className="w-[43px]">MT</Combo>
                  <span className="pt-px">Bottom</span><Combo className="w-[43px]">Poly</Combo><Combo className="w-[43px]">Poly</Combo>
                </div>
                <div className="mt-[3px] ml-[5px] flex h-[15px] items-center">
                  <span className="w-[49px] pt-[2px]">Via</span>
                  <Split className="h-[15px] w-[31px]"><svg width="13" height="11" viewBox="0 0 13 11"><path d="M0 1h4v9H0zM5 1h8v4H5zM5 6h8v4H5z" fill="#2828c8" /><path d="M1 3h2M1 7h2M6 3h2M10 3h2M6 8h2M10 8h2" stroke="#e02040" strokeWidth="1.800" /></svg></Split>
                  <Split className="ml-[3px] h-[15px] w-[31px]"><svg width="13" height="12" viewBox="0 0 13 12"><path d="M4 0h4v7H4z" fill="#28a0e8" /><path d="M0 6h13v5H0z" fill="#2828c8" /><path d="M2 8.500h3M9 8.500h3" stroke="#e02040" strokeWidth="2" /><path d="M5 7h3v3H5z" fill="#20d0a0" /></svg></Split>
                  <Dots className="ml-[5px]" />
                </div>
                <div className="mt-[3px] flex h-[15px] items-center">
                  <span className="ml-[12px] flex size-[14px] items-center justify-center rounded-full border border-[#aaa] bg-[#ddd]"><svg width="12" height="12" viewBox="0 0 12 12"><path d="M1 1h10v5H1z" fill="#405690" /><path d="M3 1v5M6 1v5M9 1v5M1 3.500h10" stroke="#eee" strokeWidth=".7" /><path d="M2 11V8l2 2 2-2v3M8 8v3M10 8v3" stroke="#c04060" fill="none" /></svg></span>
                  <svg width="11" height="10" viewBox="0 0 11 10" className="ml-[8px]"><path d="M0 3.500h5V.5L10 5 5 9.500v-3H0z" fill="#bbb" stroke="#888" strokeWidth=".8" /></svg>
                  <span className="ml-[8px] w-[60px] pt-[2px] whitespace-nowrap">Min Num Cuts</span>
                  <span className="h-[14px] w-[34px] rounded-tl-[2px] border-t border-l border-[#999] pl-[2px] leading-[12px]">1</span>
                  <span className="flex h-[14px] w-[12px] flex-col items-center justify-center gap-[3px] bg-[#b40410]"><svg width="5" height="3" viewBox="0 0 5 3"><path d="M0 3h5L2.500 0z" fill="#fff" /></svg><svg width="5" height="3" viewBox="0 0 5 3"><path d="M0 0h5L2.500 3z" fill="#fff" /></svg></span>
                </div>
                <div className="mt-[2px] w-[182px] border-t border-[#c4c4c4]" />
                <div className="mt-[2px] ml-[4px] flex h-[15px] items-center"><Check on={false} /><span className="ml-[5px] w-[58px] pt-px whitespace-nowrap">Net Width to</span><Combo off className="w-[105px]">Maximum Pin Width</Combo></div>
                <div className="mt-[4px] ml-[5px] flex h-[15px] items-center"><span className="w-[71px] pt-[2px] whitespace-nowrap">Snap Wires to</span><Combo className="w-[103px]">Snap Pattern</Combo></div>
              </div>
            </div>
          </Group>
          <Group title="Automatic" className="mt-[2px] h-[190px]">
            <div className="mt-[4px] ml-[7px] flex h-[15px] items-center"><span className="w-[68px]">Command</span><Combo className="w-[94px]">Auto Route</Combo></div>
            <div className="mt-[2px] ml-[7px] flex h-[15px] items-center">
              <span className="w-[68px]">Route Net</span>
              <button className="h-[14px] w-[37px] rounded-[7px] border border-[#a0a0a0] bg-linear-to-b from-[#f4f4f4] to-[#c8c8c8] leading-[12px]">All</button>
              <button className="ml-[5px] h-[14px] w-[45px] rounded-[7px] border border-[#a0a0a0] bg-[#d8d8d8] leading-[12px] text-[#909090]">Selected</button>
            </div>
            <div className="mt-[3px] ml-[7px] flex h-[22px] items-center">
              <span className="w-[68px] pb-[2px]">Design Style</span>
              <Split className="h-[22px] w-[38px]"><svg width="18" height="18" viewBox="0 0 18 18"><path d="M0 0h18v18H0z" fill="#111" /><path d="M2 2h14M2 5h14" stroke="#2040e0" strokeWidth="1.500" /><path d="M3 2h4v5H3z" fill="#e02020" /><path d="M10 2h4v4h-4z" fill="#20b030" /><circle cx="11.500" cy="12" r="4" fill="#999" stroke="#ddd" strokeDasharray="1.600 1.200" strokeWidth="2" /><circle cx="11.500" cy="12" r="1.600" fill="#333" /></svg></Split>
              <span className="mb-[2px] ml-[4px] flex size-[15px] items-center justify-center rounded-full border border-[#aaa] bg-[#e6e0d8]"><i className="size-[10px] rounded-full border-2 border-[#e8943c] bg-[#f8e8d0]" /></span>
            </div>
            <div className="mt-[2px] ml-[7px] flex h-[22px] items-center">
              <span className="w-[68px] pb-[2px]">Route Flow</span>
              <Split className="h-[22px] w-[38px]"><svg width="20" height="18" viewBox="0 0 20 18"><path d="M2 6h5v11M7 10V2h4M10 17v-5h3V6h5" fill="none" stroke="#b82020" strokeWidth="2" /><path d="M1 5h2v2H1zM17 5h2v2h-2zM11 1h2v2h-2zM9 16h2v2H9z" fill="#111" /></svg></Split>
              <Dots className="mt-[2px] ml-[5px]" />
            </div>
            <div className="mt-[2px] ml-px h-[90px] w-[196px] border-t-2 border-l-2 border-[#444]">
              <div className="mt-[5px] ml-[8px] flex h-[15px] items-center">
                <span className="w-[75px]">Wrong Way Tax</span><Combo className="w-[54px]">As Is</Combo>
                <span className="ml-[11px] flex h-[15px] w-[41px] justify-between border border-[#c4c4c4] bg-[#e4e4e4] pl-[3px] leading-[13px] text-[#909090]">1
                  <i className="flex w-[12px] flex-col items-center justify-center gap-[3px] bg-[#ccc]"><svg width="5" height="3" viewBox="0 0 5 3"><path d="M0 3h5L2.500 0z" fill="#999" /></svg><svg width="5" height="3" viewBox="0 0 5 3"><path d="M0 0h5L2.500 3z" fill="#999" /></svg></i>
                </span>
              </div>
              <div className="mt-[3px] ml-[7px] flex h-[13px] items-center gap-[4px] tracking-[0.05px] whitespace-nowrap"><Check />Prefer Violations to Opens</div>
              <div className="mt-[2px] ml-[7px] flex h-[13px] items-center gap-[4px] tracking-[0.05px] whitespace-nowrap"><Check />Exclude Blocked Pins During Routing</div>
            </div>
          </Group>
        </div>
        <Track className="ml-[1px] w-[12px]"><Arrow up />
          <i className="flex h-[313px] w-[11px] flex-col items-center justify-center gap-px rounded-[4px] border border-[#999] bg-[#d0d0d0]"><b className="h-px w-[5px] bg-[#999]" /><b className="h-px w-[5px] bg-[#999]" /><b className="h-px w-[5px] bg-[#999]" /></i>
          <i className="flex-1" /><Arrow /></Track>
      </div>
      <div className="flex h-[19px] shrink-0 items-stretch border-t-2 border-[#222]">
        <Tab className="mb-px w-[71px]">Annotation ...</Tab><Tab className="mb-px w-[69px]">Constraint ...</Tab><Tab className="mb-px w-[44px] pr-px">Track...</Tab><Tab on className="w-[44px] pr-[3px]">Wire ...</Tab>
      </div>
    </section>
  );
}

export default function App() {
  return (
    <div className="flex h-[617px] w-[1079px] flex-col overflow-hidden bg-[#e2e2e2] font-['Open_Sans','Noto_Sans',sans-serif] text-[8.7px] text-[#2a2a2a]">
      <header className="flex h-[15px] shrink-0 items-center justify-between border-t border-b border-t-[#888] border-b-[#888] bg-[#d6d6d6]">
        <span className="flex h-full w-[13px] items-center justify-center border-r border-[#aaa]"><i className="h-[3px] w-[7px] border border-[#aaa] bg-[#eee]" /></span>
        <span className="text-[10px] tracking-[0.02px] text-[#e01020]">Virtuoso® Layout Suite EXL Editing: Two_Stage_OpAmp bias_amp layout_temp *</span>
        <span className="flex h-full w-[42px] items-center text-[#aaa]">
          <i className="flex h-full w-[14px] items-center justify-center border-l border-[#aaa]"><b className="size-[3px] border border-[#aaa] bg-white" /></i>
          <i className="flex h-full w-[14px] items-center justify-center border-l border-[#aaa]"><b className="size-[8px] border border-[#aaa] bg-[#e8e8e8]" /></i>
          <i className="flex h-full w-[14px] items-center justify-center border-l border-[#aaa]"><svg width="8" height="8" viewBox="0 0 8 8"><path d="M1 1l6 6M7 1L1 7" stroke="#b4b4b4" strokeWidth="1.600" /></svg></i>
        </span>
      </header>
      <nav className="flex h-[21px] shrink-0 items-center border-b-[3px] border-[#d00808] bg-[#efefef] pt-[3px] text-[8.8px]">
        {MENUS.map(([pre, key, rest, x], i) => {
          const next = MENUS[i + 1] ? MENUS[i + 1][3] : 640;
          return (
            <span key={i} className="shrink-0 whitespace-nowrap" style={{ width: next - x, marginLeft: i === 0 ? x : 0 }}>{pre}<u className="underline-offset-2">{key}</u>{rest}</span>
          );
        })}
        <span className="ml-auto pr-[5px] font-['Noto_Sans',sans-serif] text-[12px] leading-none font-semibold tracking-[1.2px] text-[#333]">
          c<span className="relative">a<i className="absolute top-[4px] left-[1px] h-[1.5px] w-[5px] bg-[#e01020]" /></span>dence
        </span>
      </nav>
      <Bar className="mt-[3px] h-[23px] shrink-0 border-b border-[#9c9c9c] bg-linear-to-b from-[#ececec] to-[#c4c4c4]"
        items={[gr(4), ic(16, "folder", 17), mo(52), gr(62), ic(75.5, "undo", 13), ic(99, "redo", 13), sp(111.5), ic(124.5, "move", 16), ic(148.5, "copy", 15), ic(172, "stretch", 15), ic(195, "del", 14), ic(219.5, "rot"), ic(243, "info", 16), ic(267, "align", 15), sp(279), ic(292.5, "swirl", 16), ic(316, "flip", 16), mo(338.5), gr(350), ic(361.5, "schem", 18), mo(386), gr(397), ic(409, "mag", 15), mo(433), gr(443),
          [502.5, 110, <div className="flex h-[16px] w-[110px] items-stretch rounded-[2px] border border-[#999] bg-[#f4f4f4]"><span className="flex-1 pl-px leading-[14px] tracking-[0.1px]">Auto_Device_PR</span><span className="flex w-[12px] items-center justify-center bg-[#b40410]"><Down c="#fff" /></span></div>],
          ic(568.5, "win", 16), ic(593, "wineye", 17)]} />
      <Bar className="h-[23px] shrink-0 bg-linear-to-b from-[#e8e8e8] to-[#c2c2c2]"
        items={[gr(4), pr(18, "di"), pr(41, "lx"), ic(64, "doc", 14), ic(87.5, "refresh", 13), gr(104.5), ic(117, "sel", 18), pr(141.5, "pull"), pr(165, "layers"), ic(188, "cross", 18), ic(211.5, "bluesel", 18), sp(224), ic(237, "gauge", 18), ic(260.5, "warn1", 18), ic(284, "brush", 16), sp(293), pr(309, "dev"), pr(332.5, "warnx"), ic(355.5, "redbox", 17), dn(372), ic(387.5, "bulb", 15), sp(399.5), ic(412.5, "neteye", 18),
          [437, 23, <div className="h-[16px] w-[23px] rounded-[3px] border border-[#999] bg-[#f4f4f4] pl-[3px] leading-[14px]">32</div>],
          ic(461, "layersel", 18), dn(478), ic(492.5, "net", 17), dn(509),
          [526.5, 24, <div className="h-[15px] w-[24px] rounded-[3px] bg-[#c9c9c9] text-center leading-[14px] text-[#222]">Dim</div>],
          pr(552, "eyeabc"), ic(574.5, "lines", 18), dn(590.5), sp(595), ic(608, "ruler", 18), ic(632, "bluebars", 17), ic(654, "stack", 15), dn(671.5), gr(680), ic(693, "ma", 19), da(709), ic(724, "dim1", 18), da(740),
          [761, 33, <div className="h-[17px] w-[33px] rounded-[2px] border border-[#aaa] bg-[#eee] pl-[2px] leading-[15px] text-[#888]">1.00</div>],
          ic(789, "dim2", 18), da(806), ic(821, "dim3", 18), da(837), pr(853, "matrix"), ic(878, "sheet", 18)]} />
      <main className="flex h-[511px] shrink-0">
        <LeftDock />
        <div className="w-[4px] bg-[#d0d0d0]" />
        <Canvas />
        <div className="w-[4px] bg-[#d0d0d0]" />
        <RightDock />
      </main>
      <Bar className="min-h-0 flex-1 border-t border-[#f4f4f4] bg-linear-to-b from-[#e6e6e6] to-[#c6c6c6]"
        items={[gr(4), ic(15.5, "b1", 17), ic(40, "b2", 16), ic(63.5, "b3", 15), ic(87.5, "b4", 17), ic(111, "b5", 18), ic(134.5, "b6", 16), ic(158, "b7", 17), ic(181, "b8", 17), ic(205, "b9", 17), ic(229, "b10", 17), ic(252, "b11", 17), ic(276, "b12", 18), ic(300, "b13", 15), ic(323.5, "b14", 18), ic(348, "b15"), ic(371, "b16", 18), ic(394, "b17", 17), ic(418, "b18", 17), ic(442, "b19", 18), gr(459), ic(471.5, "b20"), ic(495.5, "b21", 17), ic(519, "b22", 18), ic(542.5, "b23", 17), sp(555), ic(568, "b24", 17), ic(592, "b25", 17), ic(616, "b26", 18), ic(640, "b27", 18), ic(663, "b28", 15), ic(686.5, "b29", 17), ic(711, "b30", 18), ic(734, "b31", 17), sp(746.5), ic(760, "b32", 18), ic(783.5, "b33", 16), sp(796.5), ic(809, "b34", 14), ic(833, "b35", 18), ic(856.5, "b36", 18), ic(880, "b37", 17), ic(904, "b38", 18), ic(928, "b39", 18), ic(951.5, "b40", 16), ic(975, "b41", 17), ic(997, "b42", 16), dn(1014), ic(1030, "b43", 17), ic(1053.5, "b44"), mo(1072)]} />
    </div>
  );
}
